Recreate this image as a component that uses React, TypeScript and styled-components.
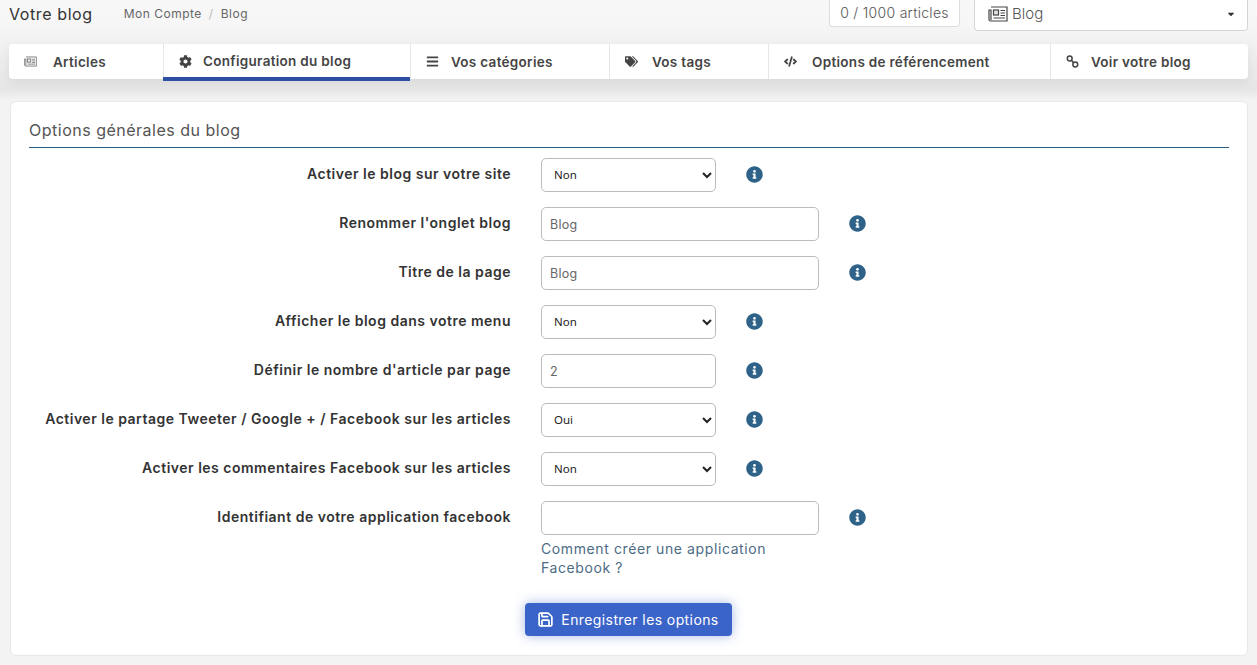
import React from 'react';
import styled, { createGlobalStyle } from 'styled-components';
import { Save } from 'lucide-react';
import { FaCaretDown, FaCode, FaCog, FaInfoCircle, FaBars, FaTags } from 'react-icons/fa';

const GlobalStyle = createGlobalStyle`
  html, body {
    margin: 0;
    padding: 0;
    height: 665px;
    overflow: hidden;
    background: #f3f3f3;
    font-family: Inter, "Noto Sans", sans-serif;
    color: #333;
  }
`;

const Page = styled.div`
  width: 1257px;
  height: 665px;
  box-sizing: border-box;
  padding: 0 9px;
  background: linear-gradient(#f8f8f8 0, #f6f6f6 25px, #e6e6e6 90px, #f3f3f3 100px);
`;

const Header = styled.header`
  display: flex;
  align-items: flex-start;
  height: 44px;
`;

const Title = styled.h1`
  margin: 3px 0 0;
  font-size: 16px;
  line-height: 22px;
  font-weight: 400;
  letter-spacing: 0.6px;
  color: #333;
`;

const Crumbs = styled.div`
  display: flex;
  gap: 7px;
  margin: 6px 0 0 31px;
  font-size: 12px;
  line-height: 16px;
  letter-spacing: 0.5px;
  color: #666;
`;

const CrumbSep = styled.span`
  color: #bbb;
`;

const Counter = styled.div`
  margin-left: auto;
  width: 131px;
  height: 27px;
  box-sizing: border-box;
  border: 1px solid #ddd;
  border-top: 0;
  border-radius: 0 0 4px 4px;
  background: #fff;
  font-size: 14px;
  font-weight: 300;
  line-height: 26px;
  letter-spacing: 0.3px;
  text-align: center;
  color: #555;
`;

const BlogPicker = styled.div`
  display: flex;
  align-items: center;
  gap: 4px;
  width: 274px;
  height: 31px;
  box-sizing: border-box;
  margin-left: 14px;
  padding: 0 11px 3px 13px;
  border: 1px solid #d5d5d5;
  border-top: 0;
  border-radius: 0 0 4px 4px;
  background: #fff;
  font-size: 15px;
  font-weight: 300;
  color: #555;

  svg:last-child {
    width: 10px;
    height: 10px;
    margin-left: auto;
    color: #333;
  }
`;

const NewsSvg = styled.svg<{ $w: number; $h: number; $color: string }>`
  flex: none;
  width: ${(p) => p.$w}px;
  height: ${(p) => p.$h}px;
  color: ${(p) => p.$color};
`;

const NewsIcon = ({ w, h, color }: { w: number; h: number; color: string }) => (
  <NewsSvg $w={w} $h={h} $color={color} viewBox="0 0 20 16" fill="none" stroke="currentColor" strokeWidth="1.2">
    <path d="M3 1h16v14H2.5C1.5 15 1 14.4 1 13.5V4h2v10" />
    <rect x="5.5" y="4" width="5" height="5" fill="currentColor" fillOpacity="0.15" />
    <path d="M12.5 4.5h4.5M12.5 7h4.5M12.5 9.5h4.5M5.5 12h11.5" />
  </NewsSvg>
);

const LinkIcon = () => (
  <svg viewBox="0 0 14 14" fill="none" stroke="currentColor" strokeWidth="1.6">
    <circle cx="4" cy="3.8" r="2.6" />
    <circle cx="10" cy="10.2" r="2.6" />
    <path d="M5.8 5.7l2.4 2.6" />
  </svg>
);

const Tabs = styled.nav`
  display: flex;
  height: 35px;
  width: 1239px;
  border-radius: 4px;
  background: #fff;
  box-shadow: 0 4px 12px rgba(0, 0, 0, 0.07);
`;

const Tab = styled.div<{ $width: number; $active?: boolean }>`
  position: relative;
  display: flex;
  align-items: center;
  flex: 0 0 ${(p) => p.$width}px;
  box-sizing: border-box;
  padding: 0 0 ${(p) => (p.$active ? 1 : 0)}px 15px;
  border-left: 1px solid #e6e6e6;
  font-size: 13.5px;
  font-weight: 600;
  letter-spacing: 0.3px;
  color: #444;

  &:first-child {
    border-left: 0;
  }

  ${(p) =>
    p.$active &&
    `
    &::after {
      content: '';
      position: absolute;
      left: -1px;
      right: 0;
      bottom: -2px;
      height: 4px;
      background: #2c4fa3;
    }
  `}
`;

const TabIcon = styled.span<{ $slot: number }>`
  display: flex;
  align-items: center;
  width: ${(p) => p.$slot}px;
  flex: none;
  color: #444;

  svg {
    width: 13px;
    height: 13px;
  }
`;

const Card = styled.section`
  width: 1238px;
  height: 555px;
  box-sizing: border-box;
  margin: 22px 0 0 1px;
  padding: 18px 18px 0;
  border: 1px solid #e8e8e8;
  border-radius: 6px;
  background: #fff;
`;

const CardTitle = styled.h2`
  margin: 0 0 10px;
  padding-bottom: 7px;
  border-bottom: 1px solid #2f5a80;
  font-size: 16px;
  line-height: 20px;
  font-weight: 400;
  letter-spacing: 0.5px;
  color: #555;
`;

const Row = styled.div`
  display: flex;
  align-items: flex-start;
  margin-bottom: 15px;
`;

const Label = styled.label`
  width: 482px;
  padding-top: 7px;
  line-height: 18px;
  text-align: right;
  font-size: 14px;
  font-weight: 600;
  letter-spacing: 0.5px;
  color: #333;
`;

const Control = styled.div<{ $wide?: boolean }>`
  width: ${(p) => (p.$wide ? 278 : 175)}px;
  margin-left: 30px;
`;

const Select = styled.select`
  width: 100%;
  height: 34px;
  box-sizing: border-box;
  padding: 0 8px 2px;
  border: 1px solid #bbb;
  border-radius: 5px;
  background-color: #fff;
  font-family: "Noto Sans", sans-serif;
  font-size: 11.5px;
  color: #222;
`;

const Input = styled.input`
  display: block;
  width: 100%;
  height: 34px;
  box-sizing: border-box;
  padding: 1px 8px 0;
  border: 1px solid #bbb;
  border-radius: 5px;
  background: #fff;
  font-family: Inter, sans-serif;
  font-size: 12.5px;
  letter-spacing: 0.3px;
  color: #666;
`;

const HelpLink = styled.a`
  display: block;
  margin-top: 4px;
  font-size: 14px;
  line-height: 19px;
  letter-spacing: 0.6px;
  color: #4c6c84;
`;

const Info = styled(FaInfoCircle)`
  flex: none;
  width: 17px;
  height: 17px;
  margin: 8px 0 0 30px;
  color: #2e6288;
`;

const Actions = styled.div`
  display: flex;
  justify-content: center;
  margin-top: 26px;
  padding-right: 1px;
`;

const SaveButton = styled.button`
  display: flex;
  align-items: center;
  gap: 7px;
  height: 33px;
  padding: 0 13px 0 12px;
  border: 0;
  border-radius: 4px;
  background: #3b64c8;
  box-shadow: 0 0 12px rgba(59, 100, 200, 0.45);
  font-family: Inter, sans-serif;
  font-size: 14px;
  letter-spacing: 0.4px;
  color: #fff;

  svg {
    width: 17px;
    height: 17px;
  }
`;

const tabs = [
  { label: 'Articles', width: 154, slot: 29, icon: <NewsIcon w={16} h={12} color="#666" /> },
  { label: 'Configuration du blog', width: 247, slot: 24, icon: <FaCog />, active: true },
  { label: 'Vos catégories', width: 199, slot: 25, icon: <FaBars /> },
  { label: 'Vos tags', width: 159, slot: 27, icon: <FaTags /> },
  { label: 'Options de référencement', width: 282, slot: 28, icon: <FaCode /> },
  { label: 'Voir votre blog', width: 198, slot: 25, icon: <LinkIcon /> },
];

type Field = {
  label: string;
  kind: 'select' | 'text' | 'number';
  value: string;
  wide?: boolean;
  help?: boolean;
};

const fields: Field[] = [
  { label: 'Activer le blog sur votre site', kind: 'select', value: 'Non' },
  { label: "Renommer l'onglet blog", kind: 'text', value: 'Blog', wide: true },
  { label: 'Titre de la page', kind: 'text', value: 'Blog', wide: true },
  { label: 'Afficher le blog dans votre menu', kind: 'select', value: 'Non' },
  { label: "Définir le nombre d'article par page", kind: 'number', value: '2' },
  { label: 'Activer le partage Tweeter / Google + / Facebook sur les articles', kind: 'select', value: 'Oui' },
  { label: 'Activer les commentaires Facebook sur les articles', kind: 'select', value: 'Non' },
  { label: 'Identifiant de votre application facebook', kind: 'text', value: '', wide: true, help: true },
];

export default function App() {
  return (
    <Page>
      <GlobalStyle />
      <Header>
        <Title>Votre blog</Title>
        <Crumbs>
          <span>Mon Compte</span>
          <CrumbSep>/</CrumbSep>
          <span>Blog</span>
        </Crumbs>
        <Counter>0 / 1000 articles</Counter>
        <BlogPicker>
          <NewsIcon w={20} h={16} color="#444" />
          Blog
          <FaCaretDown />
        </BlogPicker>
      </Header>
      <Tabs>
        {tabs.map((tab) => (
          <Tab key={tab.label} $width={tab.width} $active={tab.active}>
            <TabIcon $slot={tab.slot}>{tab.icon}</TabIcon>
            {tab.label}
          </Tab>
        ))}
      </Tabs>
      <Card>
        <CardTitle>Options générales du blog</CardTitle>
        {fields.map((field) => (
          <Row key={field.label}>
            <Label>{field.label}</Label>
            <Control $wide={field.wide}>
              {field.kind === 'select' ? (
                <Select defaultValue={field.value}>
                  <option>Non</option>
                  <option>Oui</option>
                </Select>
              ) : (
                <Input type={field.kind} defaultValue={field.value} />
              )}
              {field.help && <HelpLink>Comment créer une application Facebook ?</HelpLink>}
            </Control>
            <Info />
          </Row>
        ))}
        <Actions>
          <SaveButton>
            <Save strokeWidth={2.4} />
            Enregistrer les options
          </SaveButton>
        </Actions>
      </Card>
    </Page>
  );
}
